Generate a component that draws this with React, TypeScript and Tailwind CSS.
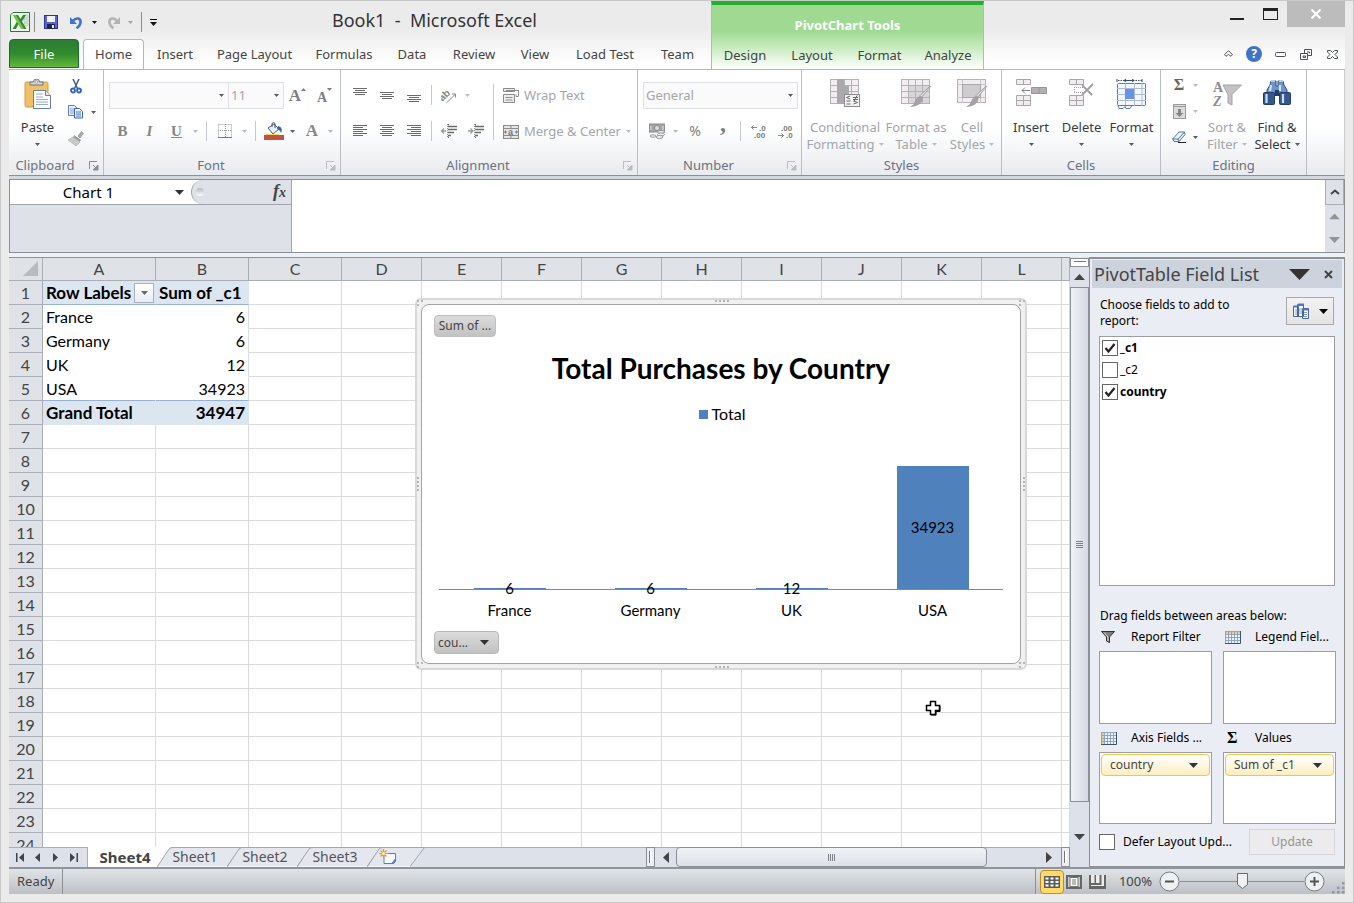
import React, { useState } from 'react';

/* ---------- small shared pieces ---------- */

function Arrow({ color = '#555b63', w = 5 }: { color?: string; w?: number }) {
  const h = Math.ceil(w / 2);
  return (
    <svg width={w} height={h} viewBox={`0 0 ${w} ${h}`} className="shrink-0" aria-hidden="true">
      <path d={`M0 0H${w}L${w / 2} ${h}Z`} fill={color} />
    </svg>
  );
}

const FAINT = '#b9bdc3';

function Tool({ label, className, children }: { label: string; className: string; children: React.ReactNode }) {
  return (
    <button type="button" aria-label={label} className={`flex h-6 shrink-0 items-center justify-center ${className}`}>
      {children}
    </button>
  );
}

function Sep({ className = 'w-3' }: { className?: string }) {
  return (
    <span className={`flex shrink-0 justify-center ${className}`}>
      <span className="h-5 w-px bg-[#c3c7ce]" />
    </span>
  );
}

function Group({
  title,
  width,
  launcher,
  dim,
  children,
}: {
  title: string;
  width: string;
  launcher?: boolean;
  dim?: boolean;
  children: React.ReactNode;
}) {
  return (
    <section aria-label={title} className={`flex shrink-0 flex-col border-r border-[#b9bdc4] ${width}`}>
      <div className="flex h-[85px]">{children}</div>
      <div className="flex h-5 items-center pt-px">
        <span className="flex-1 text-center text-[#6b7180]">{title}</span>
        {launcher && (
          <button type="button" aria-label={`${title} options`} className={`mr-1 ml-2 ${dim ? 'opacity-50' : ''}`}>
            <svg width="10" height="10" viewBox="0 0 10 10">
              <path d="M.5 8V.5H8" fill="none" stroke="#888d96" />
              <path d="M4 4l3 3M9 4v5H4z" stroke="#888d96" fill="#888d96" />
            </svg>
          </button>
        )}
      </div>
    </section>
  );
}

function BigButton({
  icon,
  lines,
  width,
  disabled,
}: {
  icon: React.ReactNode;
  lines: string[];
  width: string;
  disabled?: boolean;
}) {
  const arrow = disabled ? FAINT : '#555b63';
  return (
    <button
      type="button"
      className={`flex shrink-0 flex-col items-center pt-[9px] leading-[17px] ${width} ${
        disabled ? 'text-[#a3a6ab]' : 'text-[#333a42]'
      }`}
    >
      <span className="flex h-[40px] items-start">{icon}</span>
      <span className="whitespace-nowrap">{lines[0]}</span>
      <span className="flex h-[17px] items-center gap-1 whitespace-nowrap">
        {lines[1]}
        <Arrow color={arrow} />
      </span>
    </button>
  );
}

/* ---------- icons ---------- */

const ExcelLogo = () => (
  <svg width="20" height="20" viewBox="0 0 20 20" className="shrink-0">
    <path d="M.5 3L3 .5H19.500V19.500H.5Z" fill="#f1f8ee" stroke="#2c7a3d" />
    <path d="M14 3h4v3h-4zM14 7h4v3h-4zM14 11h4v3h-4z" fill="#dcebd8" stroke="#9fc59a" strokeWidth=".6" />
    <path d="M3 3h5l2.500 4L13 3h3l-4 6.500 4.500 7.500h-5L8.500 12 6 17H2.500l4.500-7.500z" fill="#2f8a3c" />
    <path d="M3 3h3l8 14h-3z" fill="#7ac143" />
  </svg>
);

const SaveIcon = () => (
  <svg width="14" height="14" viewBox="0 0 14 14">
    <rect x=".5" y=".5" width="13" height="13" fill="#5a66d2" stroke="#2c3590" />
    <rect x="3" y="1" width="8" height="6" fill="#f2f4fb" />
    <rect x="3" y="9" width="8" height="5" fill="#20264f" />
    <rect x="8" y="10" width="2" height="3" fill="#e8ebf7" />
  </svg>
);

const UndoIcon = ({ color }: { color: string }) => (
  <svg width="13" height="13" viewBox="0 0 13 13">
    <path d="M3 5C6 1 11 2 10.500 6.500 10.300 9 8.500 11 6.500 12.300" fill="none" stroke={color} strokeWidth="2.600" />
    <path d="M0 1v7h7z" fill={color} />
  </svg>
);

const PasteIcon = () => (
  <svg width="28" height="31" viewBox="0 0 28 31">
    <rect x="1" y="3" width="23" height="25" rx="1.500" fill="#f0c068" stroke="#d29b3f" />
    <path d="M6 6V3h3.500a3 3 0 016 0H19v3z" fill="#d7d9dc" stroke="#6e737b" />
    <circle cx="12.500" cy="3" r="1.300" fill="#fff" stroke="#6e737b" strokeWidth=".6" />
    <path d="M9.500 11.500h12l5 5v13h-17z" fill="#fafcff" stroke="#6a7fa6" />
    <path d="M21.500 11.500v5h5" fill="#dfe7f5" stroke="#6a7fa6" />
    <path d="M12 15h7M12 18h7M12 20.500h12M12 23h12M12 25.500h12" stroke="#9bacc9" />
  </svg>
);

const CutIcon = () => (
  <svg width="12" height="15" viewBox="0 0 12 15">
    <path d="M3 0l4.500 9.500M9 0L4.500 9.500" stroke="#44597f" strokeWidth="1.500" />
    <circle cx="3" cy="11.500" r="2" fill="none" stroke="#2d62c2" strokeWidth="1.800" />
    <circle cx="9" cy="11.500" r="2" fill="none" stroke="#2d62c2" strokeWidth="1.800" />
  </svg>
);

const CopyIcon = () => (
  <svg width="16" height="14" viewBox="0 0 16 14">
    <path d="M.5.5h6l3 3v7h-9z" fill="#eaf1fc" stroke="#5b7fc0" />
    <path d="M2 4h4M2 6h4M2 8h4" stroke="#7f9fd4" />
    <path d="M6.500 3.500h5l3 3v6.500h-8z" fill="#eaf1fc" stroke="#3c66b4" />
    <path d="M8 7h5M8 9h5M8 11h5" stroke="#4e7cc9" />
  </svg>
);

const BrushIcon = () => (
  <svg width="16" height="15" viewBox="0 0 16 15">
    <path d="M10 5l3.500-4.500 2 2L12 7z" fill="#aaa" stroke="#888" strokeWidth=".6" />
    <path d="M6 4l7 5-1.500 2L5 6.500z" fill="#9b9b9b" />
    <path d="M5 6l7 5-4 4-8-6z" fill="#c9c9c9" stroke="#aaa" strokeWidth=".6" />
  </svg>
);

const BorderIcon = () => (
  <svg width="14" height="14" viewBox="0 0 14 14">
    <path d="M.5.5h13v13M.5.5v13M7.500 0v13M0 6.500h14" fill="none" stroke="#9a9a9a" strokeDasharray="1 1" />
    <path d="M0 13.500h14" stroke="#777" />
  </svg>
);

const FillIcon = () => (
  <svg width="20" height="18" viewBox="0 0 20 18">
    <path d="M4 6l6-4 5 5-6 5z" fill="#e6effa" stroke="#3d5f8f" />
    <path d="M8 5V1.500a2 2 0 013 0V6" fill="none" stroke="#4e4e4e" />
    <path d="M14 4c4 1 4.500 4 3 7-1-3-2-3-4-4z" fill="#2f65b5" />
    <rect x="0" y="13" width="20" height="5" fill="#c0504d" />
    <path d="M2 12.500h13" stroke="#f5e04a" />
  </svg>
);

const HLines = ({ rows }: { rows: [number, number, number][] }) => (
  <svg width="14" height="14" viewBox="0 0 14 14">
    {rows.map(([x, y, w]) => (
      <rect key={y} x={x} y={y} width={w} height="1" fill="#6a6a6a" />
    ))}
  </svg>
);

const OrientIcon = () => (
  <svg width="16" height="15" viewBox="0 0 16 15">
    <text x="0" y="12" transform="rotate(-45 3 11)" fontSize="10" fontWeight="700" fontFamily="Liberation Sans, sans-serif" fill="#858585">
      ab
    </text>
    <path d="M6 14.500L14.500 6M14.500 9.500V6h-3.500" fill="none" stroke="#8a8a8a" />
  </svg>
);

const IndentIcon = ({ right }: { right?: boolean }) => (
  <svg width="16" height="14" viewBox="0 0 16 14">
    <path d="M7 .5h1M7 2.500h9M7 5.500h9M7 8.500h6M7 11.500h3M7 13.500h1" stroke="#6c6c6c" strokeWidth="1.400" />
    <path d="M6.500 0v14" stroke="#8c8c8c" strokeDasharray="1 1" />
    <path d={right ? 'M0 7h5M2.500 4.500L5 7 2.500 9.500' : 'M0 7h5M3 4.500L.5 7 3 9.500'} fill="none" stroke="#9a9a9a" strokeWidth="1.300" />
  </svg>
);

const WrapIcon = () => (
  <svg width="16" height="15" viewBox="0 0 16 15">
    <path d="M.5.500h11v3H.5zM.5 6.500h11v8H.5z" fill="#ededed" stroke="#8b8b8b" />
    <path d="M3 2.500h13M2.500 9.500h7M2.500 12h7" stroke="#8b8b8b" />
    <path d="M15.500 3v5M13 6.500v2h2.500" stroke="#8b8b8b" fill="none" />
  </svg>
);

const MergeIcon = () => (
  <svg width="16" height="14" viewBox="0 0 16 14">
    <rect x=".5" y=".5" width="15" height="13" fill="#e6e6e6" stroke="#8b8b8b" />
    <path d="M0 3.500h16M0 10.500h16M8 0v3.500M8 10.500V14" stroke="#8b8b8b" />
    <path d="M1 7h3M12 7h3M2.500 5.500v3M13.500 5.500v3" stroke="#777" />
    <text x="5" y="10" fontSize="9" fontWeight="700" fontFamily="Liberation Sans, sans-serif" fill="#777">
      a
    </text>
  </svg>
);

const MoneyIcon = () => (
  <svg width="16" height="16" viewBox="0 0 16 16">
    <rect x=".5" y="1" width="15" height="8" fill="#a5a2a5" stroke="#8f8c8f" />
    <circle cx="8" cy="5" r="2.500" fill="#ddd" stroke="#8f8c8f" />
    <path d="M2 3v4M14 3v4" stroke="#e6e6e6" />
    <ellipse cx="12" cy="9" rx="3.500" ry="1.500" fill="#eee" stroke="#999" />
    <ellipse cx="12" cy="11.500" rx="3.500" ry="1.500" fill="#eee" stroke="#999" />
    <ellipse cx="10.500" cy="14" rx="3.500" ry="1.500" fill="#eee" stroke="#999" />
    <ellipse cx="4" cy="13" rx="3" ry="1.200" fill="#eee" stroke="#999" />
  </svg>
);

const DecimalIcon = ({ more }: { more?: boolean }) => (
  <svg width="17" height="15" viewBox="0 0 17 15" fontSize="8" fontWeight="700" fontFamily="Liberation Sans, sans-serif" fill="#7a7a7a">
    <path d={more ? 'M0 3.500h6M2.500 1.500l-2 2 2 2' : 'M0 11.500h6M3.500 9.500l2 2-2 2'} fill="none" stroke="#8a8a8a" />
    <text x={more ? 8 : 3} y="6.500">
      {more ? '.0' : '.00'}
    </text>
    <text x={more ? 3 : 8} y="14">
      {more ? '.00' : '.0'}
    </text>
  </svg>
);

const TableGrid = () => (
  <>
    <rect x=".5" y=".5" width="28" height="24" fill="#f1edf1" stroke="#b5b2b5" />
    <path d="M0 6.500h29M0 12.500h29M0 18.500h29M7.500 0v25M14.500 0v25M21.500 0v25" stroke="#b5b2b5" />
  </>
);

const BrushOverlay = () => (
  <>
    <path d="M30 7l-9.500 11.500-2-1.500L28 8z" fill="#dedcde" stroke="#9a989a" strokeWidth=".8" />
    <path d="M21 18c1 4-2 9-11 9.500 4-2 4-5 6-8 1.500-2 3.500-2 5-1.500z" fill="#a5a3a5" stroke="#949294" strokeWidth=".6" />
  </>
);

const CondIcon = () => (
  <svg width="31" height="30" viewBox="0 0 31 30">
    <TableGrid />
    <path d="M7 0h7v25H7zM14 7h5v11h-5z" fill="#aba9ab" />
    <rect x="14.500" y="15.500" width="15" height="12" fill="#f3f3f3" stroke="#8d8b8d" />
    <path d="M20 17l-3.500 1.500L20 20M16.500 22h4M16.500 25h4M23 18.500h5M23 20.500h5M27 16.500l-3 6M23.500 22l4 1.500-4 1.500" fill="none" stroke="#666" />
  </svg>
);

const FormatTableIcon = () => (
  <svg width="31" height="30" viewBox="0 0 31 30">
    <TableGrid />
    <path d="M8 7h20v17H8z" fill="#c9c6c9" opacity=".6" />
    <path d="M8 12.500h20M8 18.500h20M14.500 7v17M21.500 7v17" stroke="#b5b2b5" />
    <BrushOverlay />
  </svg>
);

const CellStylesIcon = () => (
  <svg width="31" height="30" viewBox="0 0 31 30">
    <rect x=".5" y=".5" width="28" height="23" fill="#f1edf1" stroke="#b5b2b5" />
    <path d="M0 5.500h29M0 18.500h29M5.500 0v24M23.500 0v24" stroke="#c9c6c9" />
    <rect x="5.500" y="5.500" width="18" height="13" fill="#cfccd0" stroke="#aaa7aa" />
    <BrushOverlay />
  </svg>
);

const InsertIcon = () => (
  <svg width="31" height="27" viewBox="0 0 31 27" fill="#f1edf1" stroke="#aaa7aa">
    <path d="M.5.500h14v5H.5zM7.500.500v5M.5 16.500h14v10H.5zM.5 21.500h14M7.500 16.500v10" />
    <path d="M15.500 8.500h15v6h-15zM23 8.500v6" fill="#b3b0b3" stroke="#979597" />
    <path d="M6 11.500h8M9 8.500l-3 3 3 3" fill="none" stroke="#858385" />
  </svg>
);

const DeleteIcon = () => (
  <svg width="25" height="27" viewBox="0 0 25 27" fill="#f1edf1" stroke="#aaa7aa">
    <path d="M.5.500h14v5H.5zM7.500.500v5M.5 16.500h14v10H.5zM.5 21.500h14M7.500 16.500v10" />
    <path d="M5.500 8v6M5 8.500h10M5 13.500h10" fill="none" strokeDasharray="1 1" />
    <path d="M13 6l10 10M24 5L13 16" fill="none" stroke="#a19fa1" strokeWidth="1.800" />
  </svg>
);

const FormatCellsIcon = () => (
  <svg width="31" height="30" viewBox="0 0 31 30">
    <path d="M1 0v3M26 0v3" stroke="#33506f" />
    <path d="M2 1.500h24" stroke="#33506f" strokeDasharray="1.500 1" />
    <path d="M8 1.500h10M10 0L8 1.500 10 3M16 0l2 1.500L16 3" stroke="#33506f" fill="none" />
    <rect x="1.500" y="4.500" width="28" height="22" rx="1" fill="#f4f8fd" stroke="#5b7ca5" />
    <path d="M1 9.500h29M1 15.500h29M1 21.500h29M9.500 4v23M18.500 4v23M26 4v23" stroke="#a9bcd6" />
    <rect x="9" y="10" width="9" height="10" fill="#6a92e8" />
    <path d="M2 26.500h14l-2 3H10l-1-2-2 2H3z" fill="#f4f8fd" stroke="#5b7ca5" />
  </svg>
);

const FillDownIcon = () => (
  <svg width="13" height="15" viewBox="0 0 13 15">
    <rect x=".5" y=".5" width="12" height="14" fill="#dcdadc" stroke="#9d9b9d" />
    <path d="M0 2.500h13" stroke="#9d9b9d" />
    <path d="M5 5h3v4h2.500L6.500 13 2.500 9H5z" fill="#858385" />
  </svg>
);

const EraserIcon = () => (
  <svg width="14" height="12" viewBox="0 0 14 12">
    <path d="M.7 8L7 1h5.500L13 3.500 7 10.500H2z" fill="#eaf2fc" stroke="#56759d" />
    <path d="M.7 8h5.500L12.500 1M6.200 8l.8 2.500" fill="none" stroke="#56759d" />
    <path d="M6 11.500h8" stroke="#222" />
  </svg>
);

const SortIcon = () => (
  <svg width="30" height="31" viewBox="0 0 30 31">
    <text x="1" y="13" fontSize="14" fontWeight="700" fontFamily="Liberation Serif, serif" fill="#8e8c8e">
      A
    </text>
    <text x="1" y="27" fontSize="14" fontWeight="700" fontStyle="italic" fontFamily="Liberation Serif, serif" fill="#8e8c8e">
      Z
    </text>
    <path d="M11 6h18.500L20 15.500V26l-4-2v-8.500z" fill="#c3c1c3" stroke="#a5a3a5" />
  </svg>
);

const FindIcon = () => (
  <svg width="28" height="27" viewBox="0 0 28 27">
    <path d="M8 2h5v5h2V2h5l1 4 3 5v4H4v-4l3-5z" fill="#6f94c9" stroke="#2f4f80" />
    <path d="M8 2h4M16 2h4" stroke="#b6cbe8" strokeWidth="2" />
    <rect x=".5" y="13.500" width="11" height="12" rx="1" fill="#34578f" stroke="#223c6b" />
    <rect x="16.500" y="13.500" width="11" height="12" rx="1" fill="#34578f" stroke="#223c6b" />
    <path d="M3.500 15v9M20 15v9M8 6l-1 6M17 6v6" stroke="#cfe0f5" strokeWidth="2.200" />
    <rect x="12" y="11" width="4" height="6" fill="#223c6b" />
  </svg>
);

const PaneLayoutIcon = () => (
  <svg width="16" height="16" viewBox="0 0 16 16">
    <path d="M5 .5h6v3H5z" fill="#4a78d0" />
    <path d="M.5 3.500h5v10h-5zM4.500 1.500h6v12h-6zM9.500 5.500h6v10h-6z" fill="#fff" stroke="#4a6494" />
    <path d="M.5 3.500h4M5 2h5M10 6.500h5" stroke="#4a78d0" strokeWidth="2" />
    <path d="M2 7h2M2 9h2M2 11h2M6 6h3M6 8h3M6 10h3M11 9.500h3M11 11.500h3M11 13.500h3" stroke="#7d9bd0" />
  </svg>
);

const FunnelIcon = () => (
  <svg width="14" height="12" viewBox="0 0 14 12">
    <path d="M.5.500h13L8.500 6v5.500l-3-1.500V6z" fill="#7d7d7d" stroke="#333" />
    <path d="M3 1.500L7 6v4" stroke="#e8e8e8" fill="none" />
  </svg>
);

const FieldGridIcon = ({ side }: { side: 'top' | 'left' }) => (
  <svg width="16" height="13" viewBox="0 0 16 13">
    <rect width="16" height="13" fill="#edf3fb" />
    {side === 'top' ? <rect width="16" height="4" fill="#f2cd74" /> : <rect width="4" height="13" fill="#f2cd74" />}
    <path d="M0 .5h16M0 3.500h16M0 6.500h16M0 9.500h16M.5 0v13M3.500 0v13M6.500 0v13M9.500 0v13M12.500 0v13" stroke="#8fa6c8" />
    <path d="M0 12.500h15.500V0" fill="none" stroke="#3b5275" />
  </svg>
);

/* ---------- ribbon ---------- */

const tabs: [string, string][] = [
  ['Insert', 'w-[62px]'],
  ['Page Layout', 'w-[97px]'],
  ['Formulas', 'w-[82px]'],
  ['Data', 'w-[54px]'],
  ['Review', 'w-[70px]'],
  ['View', 'w-[52px]'],
  ['Load Test', 'w-[88px]'],
  ['Team', 'w-[57px]'],
];

const chartTabs: [string, string][] = [
  ['Design', 'w-[66px]'],
  ['Layout', 'w-[68px]'],
  ['Format', 'w-[67px]'],
  ['Analyze', 'w-[70px]'],
];

function TabButton({ name, width }: { name: string; width: string }) {
  return (
    <button type="button" className={`h-[29px] shrink-0 pt-0.5 text-center whitespace-nowrap text-[#444] ${width}`}>
      {name}
    </button>
  );
}

function Header() {
  return (
    <header className="flex h-[69px] shrink-0 border-b border-[#b5b8bd] bg-linear-to-b from-[#ebebeb] from-40% to-white to-90%">
      <div className="flex w-[702px] shrink-0 flex-col">
        <div className="flex h-[39px] items-center">
          <div className="flex shrink-0 items-center pt-1 pl-px">
            <ExcelLogo />
            <span className="mx-1 h-5 w-px shrink-0 bg-[#8c8c8c]" />
            <button type="button" aria-label="Save" className="ml-[5px]">
              <SaveIcon />
            </button>
            <button type="button" aria-label="Undo" className="ml-3 flex items-center gap-[9px]">
              <UndoIcon color="#3f73cf" />
              <Arrow color="#111" />
            </button>
            <button type="button" aria-label="Redo" className="ml-[10px] flex items-center gap-2">
              <span className="-scale-x-100">
                <UndoIcon color="#b3b3b3" />
              </span>
              <Arrow color="#a5a5a5" />
            </button>
            <span className="mx-2 h-5 w-px shrink-0 bg-[#8c8c8c]" />
            <button type="button" aria-label="Customize toolbar" className="flex flex-col items-center gap-0.5">
              <span className="h-px w-[7px] bg-black" />
              <Arrow color="#111" w={7} />
            </button>
          </div>
          <h1 className="flex-1 pl-[175px] text-[18px] whitespace-pre text-[#333]">Book1  -  Microsoft Excel</h1>
        </div>
        <nav aria-label="Ribbon tabs" className="flex">
          <button
            type="button"
            className="h-[29px] w-[70px] rounded-t-sm border border-[#1c6b30] bg-linear-to-b from-[#2c7d33] via-[#2f8a2c] to-[#62b83c] pt-0.5 text-center text-white"
          >
            File
          </button>
          <button
            type="button"
            className="relative ml-1 h-[30px] w-[61px] rounded-t-sm border border-b-0 border-[#b5b8bd] bg-white pt-px text-center text-[#444]"
          >
            Home
          </button>
          {tabs.map(([n, w]) => (
            <TabButton key={n} name={n} width={w} />
          ))}
        </nav>
      </div>
      <div className="flex w-[273px] shrink-0 flex-col border-x border-t-4 border-x-[#8fd48b] border-t-[#22b02c] bg-linear-to-b from-[#9fd992] from-40% via-[#c5eabc] via-65% to-white">
        <div className="flex h-[35px] items-center justify-center pt-1.5 font-bold text-white">PivotChart Tools</div>
        <div className="flex">
          {chartTabs.map(([n, w]) => (
            <TabButton key={n} name={n} width={w} />
          ))}
        </div>
      </div>
      <div className="flex flex-1 flex-col items-end">
        <div className="flex h-[39px] items-start">
          <button type="button" aria-label="Minimize" className="flex h-[26px] w-[33px] items-center justify-center">
            <svg width="14" height="12" viewBox="0 0 14 12">
              <path d="M0 11h14" stroke="#222" strokeWidth="2" />
            </svg>
          </button>
          <button type="button" aria-label="Maximize" className="flex h-[26px] w-[34px] items-center justify-center">
            <svg width="15" height="12" viewBox="0 0 15 12">
              <rect x=".5" y=".5" width="14" height="11" fill="none" stroke="#222" />
              <path d="M0 1.500h15" stroke="#222" strokeWidth="3" />
            </svg>
          </button>
          <button type="button" aria-label="Close" className="flex h-[26px] w-[58px] items-center justify-center bg-[#bcbcbc]">
            <svg width="12" height="10" viewBox="0 0 12 10">
              <path d="M1.500.5l9 9M10.500.5l-9 9" stroke="#fff" strokeWidth="2" />
            </svg>
          </button>
        </div>
        <div className="flex h-7 items-center">
          <Tool label="Collapse ribbon" className="w-[26px]">
            <svg width="9" height="8" viewBox="0 0 9 8">
              <path d="M4.500.7l4 4-1.600 1.600-2.400-2-2.400 2L.5 4.700z" fill="#fff" stroke="#4a4f57" />
            </svg>
          </Tool>
          <Tool label="Help" className="w-[26px]">
            <span className="flex size-4 items-center justify-center rounded-full bg-[#3f74c8] text-xs font-bold text-white">?</span>
          </Tool>
          <Tool label="Minimize workbook" className="w-[26px]">
            <svg width="11" height="5" viewBox="0 0 11 5">
              <rect x=".5" y=".5" width="10" height="4" rx="1" fill="#fff" stroke="#4a4f57" />
            </svg>
          </Tool>
          <Tool label="Restore workbook" className="w-[26px]">
            <svg width="12" height="11" viewBox="0 0 12 11">
              <path d="M4.500.500h7v6h-7zM7 3h2.500v1.500" fill="#fff" stroke="#4a4f57" />
              <path d="M.5 4.500h7v6h-7zM3 7h2.500v1.500H3z" fill="#fff" stroke="#4a4f57" />
            </svg>
          </Tool>
          <Tool label="Close workbook" className="w-[26px]">
            <svg width="11" height="9" viewBox="0 0 11 9">
              <path d="M.5.500h3l2 2 2-2h3v1.500L8 4.500 10.500 7v1.500h-3l-2-2-2 2h-3V7L3 4.500.5 2z" fill="#fff" stroke="#4a4f57" />
            </svg>
          </Tool>
        </div>
      </div>
    </header>
  );
}

function Combo({ label, value, width }: { label: string; value: string; width: string }) {
  return (
    <label className={`relative flex h-[27px] shrink-0 items-center border border-[#dfe1e6] bg-[#fafafa] ${width}`}>
      <select aria-label={label} defaultValue={value} className="size-full appearance-none px-0.5 text-[#a3a6ab] outline-none">
        <option>{value}</option>
      </select>
      <span className="pointer-events-none absolute right-1">
        <Arrow />
      </span>
    </label>
  );
}

function Ribbon() {
  return (
    <div className="flex h-[106px] shrink-0 border-r border-b border-r-[#c9ccd1] border-b-[#8b9097] bg-linear-to-b from-white from-55% to-[#e8ebef]">
      <Group title="Clipboard" width="w-[95px]" launcher>
        <BigButton width="w-[57px]" icon={<PasteIcon />} lines={['Paste', '']} />
        <div className="flex flex-col gap-0.5 pt-1">
          <Tool label="Cut" className="w-5">
            <CutIcon />
          </Tool>
          <div className="flex">
            <Tool label="Copy" className="w-5">
              <CopyIcon />
            </Tool>
            <Tool label="Copy options" className="w-[14px]">
              <Arrow />
            </Tool>
          </div>
          <Tool label="Format Painter" className="w-5">
            <BrushIcon />
          </Tool>
        </div>
      </Group>

      <Group title="Font" width="w-[237px]" launcher dim>
        <div className="flex flex-col gap-[10px] pt-3 pl-[5px]">
          <div className="flex items-center">
            <Combo label="Font name" value="" width="w-[120px]" />
            <Combo label="Font size" value="11" width="w-[56px] -ml-px" />
            <Tool label="Grow font" className="w-[27px] text-[17px] font-bold text-[#7d7d7d]">
              <span className="font-['Liberation_Serif',serif]">A</span>
              <span className="mb-3 rotate-180">
                <Arrow color="#7d7d7d" />
              </span>
            </Tool>
            <Tool label="Shrink font" className="w-[27px] text-sm font-bold text-[#7d7d7d]">
              <span className="mt-1 font-['Liberation_Serif',serif]">A</span>
              <span className="mb-3">
                <Arrow color="#7d7d7d" />
              </span>
            </Tool>
          </div>
          <div className="flex items-center font-['Liberation_Serif',serif] text-[15px] font-bold text-[#868686]">
            <Tool label="Bold" className="w-[27px]">
              B
            </Tool>
            <Tool label="Italic" className="w-[27px] italic">
              I
            </Tool>
            <Tool label="Underline" className="w-[27px] underline">
              U
            </Tool>
            <Tool label="Underline options" className="w-[10px]">
              <Arrow color={FAINT} />
            </Tool>
            <Sep />
            <Tool label="Borders" className="w-[26px]">
              <BorderIcon />
            </Tool>
            <Tool label="Border options" className="w-3">
              <Arrow color={FAINT} />
            </Tool>
            <Sep className="w-[10px]" />
            <Tool label="Fill color" className="w-7">
              <FillIcon />
            </Tool>
            <Tool label="Fill color options" className="w-2">
              <Arrow />
            </Tool>
            <Tool label="Font color" className="w-8 text-[17px]">
              A
            </Tool>
            <Tool label="Font color options" className="w-[5px]">
              <Arrow color={FAINT} />
            </Tool>
          </div>
        </div>
      </Group>

      <Group title="Alignment" width="w-[297px]" launcher dim>
        <div className="flex flex-col gap-3 pt-[13px] pl-[5px]">
          <div className="flex items-center">
            <Tool label="Top align" className="w-[27px]">
              <HLines rows={[[0, 0, 14], [2, 2, 10], [0, 4, 14], [2, 6, 10]]} />
            </Tool>
            <Tool label="Middle align" className="w-[27px]">
              <HLines rows={[[0, 4, 14], [2, 6, 10], [0, 8, 14], [2, 10, 10]]} />
            </Tool>
            <Tool label="Bottom align" className="w-[27px]">
              <HLines rows={[[0, 7, 14], [2, 9, 10], [0, 11, 14], [2, 13, 10]]} />
            </Tool>
            <Sep className="w-2" />
            <Tool label="Orientation" className="w-7">
              <OrientIcon />
            </Tool>
            <Tool label="Orientation options" className="w-2">
              <Arrow color={FAINT} />
            </Tool>
          </div>
          <div className="flex items-center">
            <Tool label="Align left" className="w-[27px]">
              <HLines rows={[[0, 1, 14], [0, 3, 10], [0, 5, 14], [0, 7, 10], [0, 9, 14], [0, 11, 10]]} />
            </Tool>
            <Tool label="Center" className="w-[27px]">
              <HLines rows={[[0, 1, 14], [2, 3, 10], [0, 5, 14], [2, 7, 10], [0, 9, 14], [2, 11, 10]]} />
            </Tool>
            <Tool label="Align right" className="w-[27px]">
              <HLines rows={[[0, 1, 14], [4, 3, 10], [0, 5, 14], [4, 7, 10], [0, 9, 14], [4, 11, 10]]} />
            </Tool>
            <Sep className="w-2" />
            <Tool label="Decrease indent" className="w-7">
              <IndentIcon />
            </Tool>
            <Tool label="Increase indent" className="w-[26px]">
              <IndentIcon right />
            </Tool>
          </div>
        </div>
        <span className="mt-[14px] ml-1 h-[56px] w-px bg-[#c3c7ce]" />
        <div className="flex flex-col gap-3 pt-[13px] pl-[9px] text-[#a3a6ab]">
          <button type="button" className="flex h-6 items-center gap-[5px] pt-px">
            <WrapIcon />
            Wrap Text
          </button>
          <button type="button" className="flex h-6 items-center gap-[5px] pt-px whitespace-nowrap">
            <MergeIcon />
            Merge &amp; Center
            <Arrow color={FAINT} />
          </button>
        </div>
      </Group>

      <Group title="Number" width="w-[164px]" launcher dim>
        <div className="flex flex-col gap-[10px] pt-3 pl-[5px]">
          <Combo label="Number format" value="General" width="w-[155px]" />
          <div className="flex items-center text-[#7d7d7d]">
            <Tool label="Accounting format" className="w-7">
              <MoneyIcon />
            </Tool>
            <Tool label="Accounting options" className="w-2">
              <Arrow color={FAINT} />
            </Tool>
            <Tool label="Percent style" className="w-8 text-sm">
              %
            </Tool>
            <Tool label="Comma style" className="w-6 font-['Liberation_Serif',serif] text-2xl leading-none font-bold">
              <span className="-mt-4">,</span>
            </Tool>
            <Sep className="w-[10px]" />
            <Tool label="Increase decimal" className="w-7">
              <DecimalIcon more />
            </Tool>
            <Tool label="Decrease decimal" className="w-[26px]">
              <DecimalIcon />
            </Tool>
          </div>
        </div>
      </Group>

      <Group title="Styles" width="w-[200px]">
        <BigButton width="w-[86px]" icon={<CondIcon />} lines={['Conditional', 'Formatting']} disabled />
        <BigButton width="w-[56px]" icon={<FormatTableIcon />} lines={['Format as', 'Table']} disabled />
        <BigButton width="w-[56px]" icon={<CellStylesIcon />} lines={['Cell', 'Styles']} disabled />
      </Group>

      <Group title="Cells" width="w-[159px]">
        <span className="w-[3px]" />
        <BigButton width="w-[52px]" icon={<InsertIcon />} lines={['Insert', '']} />
        <BigButton width="w-[49px]" icon={<DeleteIcon />} lines={['Delete', '']} />
        <BigButton width="w-[51px]" icon={<FormatCellsIcon />} lines={['Format', '']} />
      </Group>

      <Group title="Editing" width="w-[146px]">
        <div className="flex w-[41px] flex-col gap-0.5 pt-[3px] pl-2">
          {[
            { label: 'Sum', icon: <span className="font-['Liberation_Serif',serif] text-base leading-none font-bold text-[#666]">Σ</span>, arrow: FAINT },
            { label: 'Fill', icon: <FillDownIcon />, arrow: FAINT },
            { label: 'Clear', icon: <EraserIcon />, arrow: '#555b63' },
          ].map((t) => (
            <div key={t.label} className="flex">
              <Tool label={t.label} className="w-5">
                {t.icon}
              </Tool>
              <Tool label={`${t.label} options`} className="w-3">
                <Arrow color={t.arrow} />
              </Tool>
            </div>
          ))}
        </div>
        <BigButton width="w-[50px]" icon={<SortIcon />} lines={['Sort &', 'Filter']} disabled />
        <BigButton width="w-[50px]" icon={<FindIcon />} lines={['Find &', 'Select']} />
      </Group>
    </div>
  );
}

/* ---------- formula bar ---------- */

function FormulaBar() {
  return (
    <div className="flex h-[74px] shrink-0 border border-[#8b9097] bg-[#dee2e8]">
      <div className="flex w-[281px] shrink-0 flex-col">
        <div className="flex h-[25px] border-b border-[#a0a5ad] bg-white">
          <input aria-label="Name box" defaultValue="Chart 1" className="w-[157px] text-center text-[15px] outline-none" />
          <button type="button" aria-label="Name list" className="flex w-6 items-center justify-center">
            <Arrow color="#333" w={9} />
          </button>
          <div className="flex flex-1 items-center justify-between rounded-l-full border-l border-[#a0a5ad] bg-[#dee2e8] pr-[5px] pl-1">
            <span className="size-2 rounded-full bg-linear-to-b from-[#b4b8be] to-white" />
            <button type="button" aria-label="Insert function" className="font-['Liberation_Serif',serif] text-lg leading-none font-bold text-[#444] italic">
              f<sub className="bottom-0 text-sm">x</sub>
            </button>
          </div>
        </div>
      </div>
      <textarea aria-label="Formula" className="flex-1 resize-none border-l border-[#a0a5ad] bg-white outline-none" />
      <div className="flex w-[19px] shrink-0 flex-col items-center">
        <button type="button" aria-label="Collapse formula bar" className="flex h-[25px] w-full items-center justify-center border border-t-0 border-[#a9aeb6]">
          <svg width="10" height="6" viewBox="0 0 10 6">
            <path d="M1 5l4-3.500L9 5" fill="none" stroke="#444" strokeWidth="2" />
          </svg>
        </button>
        <button type="button" aria-label="Scroll formula up" className="flex flex-1 rotate-180 items-center">
          <Arrow color="#8c9794" w={11} />
        </button>
        <button type="button" aria-label="Scroll formula down" className="flex flex-1 items-center">
          <Arrow color="#8c9794" w={11} />
        </button>
      </div>
    </div>
  );
}

/* ---------- worksheet ---------- */

const columns = ['A', 'B', 'C', 'D', 'E', 'F', 'G', 'H', 'I', 'J', 'K', 'L', ''];
const colWidths = [
  'w-[113px]', 'w-[93px]', 'w-[93px]', 'w-[80px]', 'w-[80px]', 'w-[80px]', 'w-[80px]',
  'w-[80px]', 'w-[80px]', 'w-[80px]', 'w-[80px]', 'w-[80px]', 'w-auto',
];
const pivot: [string, string][] = [
  ['Row Labels', 'Sum of _c1'],
  ['France', '6'],
  ['Germany', '6'],
  ['UK', '12'],
  ['USA', '34923'],
  ['Grand Total', '34947'],
];

function cellStyle(row: number, col: number) {
  if (col > 1 || row > 5) return 'border-[#d8dadc]';
  if (row === 0) return 'bg-[#dce6f1] border-r-[#dce6f1] border-b-[#95b3d7] text-[17px] font-bold';
  if (row === 5) return 'bg-[#dce6f1] border-[#dce6f1] text-[17px] font-bold';
  const right = col === 1 ? 'border-r-[#d8dadc]' : 'border-r-transparent';
  return row === 4 ? `${right} border-b-[#95b3d7]` : `${right} border-b-transparent`;
}

function Sheet() {
  return (
    <table className="w-full table-fixed border-separate border-spacing-0 font-['Lato',sans-serif] text-base leading-none text-black">
      <colgroup>
        <col className="w-[34px]" />
        {colWidths.map((w, i) => (
          <col key={i} className={w} />
        ))}
      </colgroup>
      <thead>
        <tr className="h-6 bg-[#dfe2e7] text-[#444]">
          <th className="border-r border-b border-[#a9adb5] p-0">
            <svg width="15" height="15" viewBox="0 0 15 15" className="ml-auto mr-1">
              <path d="M15 0v15H0z" fill="#b7bcc2" />
            </svg>
          </th>
          {columns.map((c, i) => (
            <th key={i} scope="col" className="border-r border-b border-[#a9adb5] p-0 font-normal">
              {c}
            </th>
          ))}
        </tr>
      </thead>
      <tbody>
        {Array.from({ length: 24 }, (_, r) => (
          <tr key={r} className="h-6">
            <th scope="row" className="border-r border-b border-[#a9adb5] bg-[#dfe2e7] p-0 font-normal text-[#444]">
              {r + 1}
            </th>
            {columns.map((_, c) => (
              <td
                key={c}
                className={`border-r border-b px-[3px] py-0 whitespace-nowrap ${cellStyle(r, c)} ${c === 1 && r > 0 ? 'text-right' : ''}`}
              >
                {r === 0 && c === 0 ? (
                  <div className="-mr-0.5 flex items-center justify-between">
                    {pivot[0][0]}
                    <button type="button" aria-label="Filter row labels" className="flex size-5 items-center justify-center border border-[#a9b1bd] bg-linear-to-b from-white to-[#e8ecf2]">
                      <Arrow color="#666" w={7} />
                    </button>
                  </div>
                ) : (
                  pivot[r]?.[c]
                )}
              </td>
            ))}
          </tr>
        ))}
      </tbody>
    </table>
  );
}

const chartData = [
  { name: 'France', value: 6 },
  { name: 'Germany', value: 6 },
  { name: 'UK', value: 12 },
  { name: 'USA', value: 34923 },
];
const chartMax = 34923;
const plotHeight = 123;

const Dots = ({ className }: { className: string }) => (
  <span className={`absolute flex gap-0.5 ${className}`}>
    {[0, 1, 2, 3].map((i) => (
      <span key={i} className="size-0.5 bg-[#b5b5b5]" />
    ))}
  </span>
);

const CornerDots = ({ className }: { className: string }) => (
  <span className={`absolute grid grid-cols-2 gap-0.5 ${className}`}>
    {[0, 1, 2].map((i) => (
      <span key={i} className="size-0.5 bg-[#b5b5b5]" />
    ))}
  </span>
);

function PivotChart() {
  return (
    <figure
      aria-label="Total Purchases by Country"
      className="absolute top-[41px] left-[406px] h-[372px] w-[612px] rounded-md border-2 border-[#d8d8d8] bg-[#f0f0f0]/90 p-1 font-['Lato',sans-serif] text-black"
    >
      <Dots className="top-0 left-[298px]" />
      <Dots className="bottom-0 left-[298px]" />
      <Dots className="top-[177px] left-0 flex-col" />
      <Dots className="top-[177px] right-0 flex-col" />
      <CornerDots className="top-0 left-0" />
      <CornerDots className="top-0 right-0" />
      <CornerDots className="bottom-0 left-0" />
      <CornerDots className="right-0 bottom-0" />
      <div className="flex size-full flex-col rounded-lg border border-[#a3a3a3] bg-white px-3 pt-[10px] pb-[9px]">
        <button
          type="button"
          className="h-[22px] w-[62px] rounded-sm border border-[#c0c0c0] bg-linear-to-b from-[#dcdcdc] to-[#c2c2c2] text-center font-['Noto_Sans',sans-serif] text-xs whitespace-nowrap text-[#444]"
        >
          Sum of ...
        </button>
        <figcaption className="mt-[13px] text-center text-[28px] leading-[36px] font-bold">Total Purchases by Country</figcaption>
        <div className="mt-[18px] flex items-center justify-center gap-1 pl-0.5 text-base leading-5">
          <span className="size-[9px] bg-[#4f81bd]" />
          Total
        </div>
        <div className="mt-auto ml-[5px] flex h-[123px] w-[564px] items-end border-b border-[#868686] text-[15px]">
          {chartData.map((d) => {
            const h = Math.max(1, Math.round((d.value / chartMax) * plotHeight));
            return (
              <div key={d.name} className="flex flex-1 justify-center">
                <div className="flex w-[72px] items-center justify-center bg-[#4f81bd] leading-none" style={{ height: h }}>
                  {d.value}
                </div>
              </div>
            );
          })}
        </div>
        <div className="mt-[10px] ml-[5px] flex w-[564px] text-[15px] leading-5">
          {chartData.map((d) => (
            <span key={d.name} className="flex-1 text-center">
              {d.name}
            </span>
          ))}
        </div>
        <button
          type="button"
          className="mt-[11px] flex h-[23px] w-[65px] shrink-0 items-center gap-3 rounded-sm border border-[#b8b8b8] bg-linear-to-b from-[#dcdcdc] to-[#c2c2c2] px-[3px] font-['Noto_Sans',sans-serif] text-xs text-[#444]"
        >
          cou...
          <Arrow color="#333" w={9} />
        </button>
      </div>
    </figure>
  );
}

function SheetTab({ name, active }: { name?: string; active?: boolean }) {
  if (active) {
    return (
      <button type="button" className="relative h-5 w-[83px] shrink-0 pr-[9px] text-center text-[15px] leading-5 font-bold text-[#444]">
        <svg className="absolute inset-0" width="83" height="20" viewBox="0 0 83 20" aria-hidden="true">
          <path d="M0 0h83L69 20H0z" fill="#fff" />
        </svg>
        <span className="relative">{name}</span>
      </button>
    );
  }
  return (
    <button
      type="button"
      aria-label={name ?? 'Insert worksheet'}
      className={`relative -ml-[14px] flex h-5 shrink-0 items-center justify-center text-sm text-[#555] ${name ? 'w-[84px] pr-2' : 'w-[58px] pr-4'}`}
    >
      <svg className="absolute inset-0 size-full" viewBox={name ? '0 0 84 20' : '0 0 58 20'} aria-hidden="true">
        <path
          d={name ? 'M.5 19.500L12 2Q13.500.500 16 .5H83.500L70 19.500z' : 'M.5 19.500L12 2Q13.500.500 16 .5H57.500L43 19.500z'}
          fill="#e4e8ee"
          stroke="#a3a8b0"
        />
        <path d={name ? 'M1 19.500H70' : 'M1 19.500H43'} stroke="#f5f6f8" />
      </svg>
      <span className="relative">
        {name ?? (
          <svg width="18" height="16" viewBox="0 0 18 16">
            <path d="M5 4.500h11.500v8l-2 2H5z" fill="#f5f9ff" stroke="#5c7fb8" />
            <path d="M16.500 10.500l-3 4" stroke="#5c7fb8" strokeWidth="2" />
            <path d="M4.500 0v9M0 4.500h9M1.500 1.500l6 6M7.500 1.500l-6 6" stroke="#f09a1a" strokeWidth="1.200" />
            <circle cx="4.500" cy="4.500" r="1.500" fill="#fff2a8" />
          </svg>
        )}
      </span>
    </button>
  );
}

const navPaths: [string, string][] = [
  ['First sheet', 'M1 0h1.500v9H1zM9 0v9L4 4.500z'],
  ['Previous sheet', 'M7 0v9L2 4.500z'],
  ['Next sheet', 'M2 0v9l5-4.500z'],
  ['Last sheet', 'M1 0v9l5-4.500zM7.500 0H9v9H7.500z'],
];

function Splitter() {
  return (
    <span className="flex h-5 w-[9px] shrink-0 items-center justify-center border border-[#8b9097] bg-[#eceefa]">
      <span className="h-3 w-[3px] border-l border-[#777] bg-white" />
    </span>
  );
}

function BottomBar() {
  return (
    <div className="flex h-5 shrink-0 bg-[#dce1ea] shadow-[inset_0_1px_0_#a9adb5]">
      <div className="flex w-[79px] shrink-0 items-center border-r border-[#a9adb5] pl-0.5">
        {navPaths.map(([label, d]) => (
          <button key={label} type="button" aria-label={label} className="flex w-[18px] justify-center">
            <svg width="10" height="9" viewBox="0 0 10 9">
              <path d={d} fill="#40454d" />
            </svg>
          </button>
        ))}
      </div>
      <SheetTab name="Sheet4" active />
      <SheetTab name="Sheet1" />
      <SheetTab name="Sheet2" />
      <SheetTab name="Sheet3" />
      <SheetTab />
      <div className="flex-1" />
      <div className="flex w-[424px] shrink-0 items-center">
        <Splitter />
        <button type="button" aria-label="Scroll left" className="flex w-[21px] justify-center">
          <svg width="6" height="11" viewBox="0 0 6 11">
            <path d="M6 0v11L0 5.500z" fill="#444" />
          </svg>
        </button>
        <div className="flex h-5 flex-1 items-center">
          <span className="flex h-5 w-[311px] items-center justify-center gap-px rounded-sm border border-[#8b9097] bg-linear-to-b from-[#f0f3f7] to-[#dde0e6]">
            {[0, 1, 2, 3].map((i) => (
              <span key={i} className="h-[7px] w-px bg-[#7d828a]" />
            ))}
          </span>
        </div>
        <button type="button" aria-label="Scroll right" className="flex w-[24px] justify-center">
          <svg width="6" height="11" viewBox="0 0 6 11">
            <path d="M0 0v11l6-5.500z" fill="#444" />
          </svg>
        </button>
        <Splitter />
      </div>
    </div>
  );
}

function VerticalScroll() {
  return (
    <div className="flex w-[19px] shrink-0 flex-col items-center bg-[#dce1ea] pt-px">
      <span className="flex h-[9px] w-full items-center justify-center border border-[#8b9097] bg-white">
        <span className="h-[3px] w-3 border-t border-[#777]" />
      </span>
      <button type="button" aria-label="Scroll up" className="flex h-5 rotate-180 items-center">
        <Arrow color="#444" w={11} />
      </button>
      <span className="flex flex-1 flex-col items-center justify-center gap-px self-stretch border border-[#8b9097] bg-linear-to-r from-[#f0f3f7] to-[#d5d9e0]">
        {[0, 1, 2, 3].map((i) => (
          <span key={i} className="h-px w-[7px] bg-[#7d828a]" />
        ))}
      </span>
      <span className="h-[24px]" />
      <button type="button" aria-label="Scroll down" className="flex h-[21px] items-center">
        <Arrow color="#444" w={11} />
      </button>
      <span className="h-5" />
    </div>
  );
}

/* ---------- field list ---------- */

function Check({ label, initial, size = 'gap-0.5' }: { label: string; initial: boolean; size?: string }) {
  const [on, setOn] = useState(initial);
  return (
    <label className={`flex h-[22px] items-center whitespace-nowrap ${size} ${on ? 'font-bold' : ''}`}>
      <span className="relative flex size-4 shrink-0">
        <input
          type="checkbox"
          checked={on}
          onChange={(e) => setOn(e.target.checked)}
          className="size-4 appearance-none border border-[#666] bg-white"
        />
        {on && (
          <svg className="pointer-events-none absolute inset-0" width="16" height="16" viewBox="0 0 16 16">
            <path d="M3.500 8l3 3.500L12.500 4" fill="none" stroke="#222" strokeWidth="2.200" />
          </svg>
        )}
      </span>
      {label}
    </label>
  );
}

function Area({ title, icon, chip, className }: { title: string; icon: React.ReactNode; chip?: string; className: string }) {
  return (
    <div className="flex w-[113px] flex-col">
      <div className="flex h-[28px] items-center whitespace-nowrap">
        <span className="flex w-8 pl-0.5">{icon}</span>
        {title}
      </div>
      <div className={`border border-[#9a9da3] bg-white p-px ${className}`}>
        {chip && (
          <button
            type="button"
            className="flex h-[22px] w-full items-center justify-between rounded-sm border border-[#efc74a] bg-linear-to-b from-white to-[#fdeec0] pr-[11px] pl-2 text-[#444]"
          >
            {chip}
            <Arrow color="#333" w={9} />
          </button>
        )}
      </div>
    </div>
  );
}

function FieldList() {
  return (
    <aside className="flex w-[256px] shrink-0 flex-col border border-t-2 border-[#8b9097] bg-[#eaedf3] px-0.5 pt-px text-xs text-black">
      <div className="flex h-7 shrink-0 items-center bg-[#ccd3dc] pr-[9px] pl-0.5 text-[#444]">
        <h2 className="flex-1 text-[18px] whitespace-nowrap">PivotTable Field List</h2>
        <button type="button" aria-label="Field list menu" className="mr-[14px]">
          <Arrow color="#333" w={21} />
        </button>
        <button type="button" aria-label="Close field list">
          <svg width="9" height="9" viewBox="0 0 9 9">
            <path d="M1 1l7 7M8 1L1 8" stroke="#444" strokeWidth="2" />
          </svg>
        </button>
      </div>
      <div className="flex flex-1 flex-col pr-[6px] pb-[11px] pl-[7px]">
        <div className="mt-[9px] flex h-[39px] items-start justify-between">
          <p className="w-[150px] pl-px leading-4">Choose fields to add to report:</p>
          <button type="button" aria-label="Field list layout" className="mr-0.5 flex h-7 w-12 items-center justify-center gap-[10px] border border-[#a9a9a9] bg-linear-to-b from-[#f2f2f2] to-[#e4e4e4]">
            <PaneLayoutIcon />
            <Arrow color="#000" w={9} />
          </button>
        </div>
        <div className="mr-px flex flex-1 flex-col border border-[#9a9da3] bg-white pl-0.5">
          <Check label="_c1" initial />
          <Check label="_c2" initial={false} />
          <Check label="country" initial />
        </div>
        <p className="mt-[21px] h-4 pt-px pl-px leading-4">Drag fields between areas below:</p>
        <div className="flex justify-between">
          <Area title="Report Filter" icon={<FunnelIcon />} className="h-[73px]" />
          <Area title="Legend Fiel..." icon={<FieldGridIcon side="top" />} className="h-[73px]" />
        </div>
        <div className="flex justify-between">
          <Area title="Axis Fields ..." icon={<FieldGridIcon side="left" />} chip="country" className="h-[72px]" />
          <Area
            title="Values"
            icon={<span className="pl-0.5 font-['Liberation_Serif',serif] text-base leading-none font-bold">Σ</span>}
            chip="Sum of _c1"
            className="h-[72px]"
          />
        </div>
        <div className="mt-[5px] mr-px flex h-[26px] items-center justify-between">
          <Check label="Defer Layout Upd..." initial={false} size="gap-2" />
          <button type="button" className="h-[26px] w-[86px] border border-[#d5d5d5] bg-[#ececee] text-[#949494]">
            Update
          </button>
        </div>
      </div>
    </aside>
  );
}

/* ---------- status bar ---------- */

function StatusBar() {
  return (
    <footer className="flex h-[27px] shrink-0 items-center border-t-2 border-[#8f95a0] bg-linear-to-b from-[#e1e4e7] to-[#bcc0c4] pl-2 text-[#444]">
      <span className="w-[45px]">Ready</span>
      <span className="h-full w-px bg-[#8b9097]" />
      <div className="flex-1" />
      <span className="mr-1 h-full w-px bg-[#8b9097]" />
      <button type="button" aria-label="Normal view" className="flex h-6 w-6 items-center justify-center rounded-sm border border-[#c28a2c] bg-[#fddc69]">
        <svg width="16" height="12" viewBox="0 0 16 12">
          <rect width="16" height="12" fill="#5c5c5c" />
          <path d="M1.500 1.500h3v2h-3zM6.500 1.500h3v2h-3zM11.500 1.500h3v2h-3zM1.500 5h3v2h-3zM6.500 5h3v2h-3zM11.500 5h3v2h-3zM1.500 8.500h3v2h-3zM6.500 8.500h3v2h-3zM11.500 8.500h3v2h-3z" fill="#fff" />
        </svg>
      </button>
      <button type="button" aria-label="Page layout view" className="ml-[2px]">
        <svg width="16" height="14" viewBox="0 0 16 14">
          <rect x="1" y="1" width="14" height="12" fill="#ccc" stroke="#666" strokeWidth="2" />
          <rect x="4" y="2.500" width="8" height="9" fill="#fff" stroke="#777" />
          <path d="M6 5h4M6 7h4M6 9h4" stroke="#777" />
        </svg>
      </button>
      <button type="button" aria-label="Page break preview" className="ml-[7px]">
        <svg width="17" height="14" viewBox="0 0 17 14">
          <rect width="17" height="14" fill="#666" />
          <path d="M2 0h3.500v8H2zM7 0h3.500v8H7zM12.500 0H15v11H2v-1h10.500z" fill="#ececec" />
        </svg>
      </button>
      <span className="w-[53px] pl-1.5 text-center">100%</span>
      <button type="button" aria-label="Zoom out" className="shrink-0">
        <svg width="21" height="21" viewBox="0 0 21 21">
          <circle cx="10.500" cy="10.500" r="9.500" fill="#eef0f2" stroke="#777c84" />
          <path d="M6 10.500h9" stroke="#555" strokeWidth="2" />
        </svg>
      </button>
      <span className="relative flex h-[21px] w-[124px] items-center">
        <svg width="124" height="21" viewBox="0 0 124 21" aria-hidden="true">
          <path d="M0 10.500h124" stroke="#8b9097" />
          <path d="M57.500 2.500h10v11l-5 4-5-4z" fill="#eef0f2" stroke="#666b73" />
        </svg>
        <input type="range" aria-label="Zoom" defaultValue={50} className="absolute inset-0 size-full opacity-0" />
      </span>
      <button type="button" aria-label="Zoom in" className="shrink-0">
        <svg width="21" height="21" viewBox="0 0 21 21">
          <circle cx="10.500" cy="10.500" r="9.500" fill="#eef0f2" stroke="#777c84" />
          <path d="M6 10.500h9M10.500 6v9" stroke="#555" strokeWidth="2" />
        </svg>
      </button>
      <svg width="13" height="12" viewBox="0 0 13 12" className="ml-[7px] self-end" aria-hidden="true">
        <path d="M10 0h2.500v2.500H10zM5 4.500h2.500V7H5zM10 4.500h2.500V7H10zM0 9h2.500v2.500H0zM5 9h2.500v2.500H5zM10 9h2.500v2.500H10z" fill="#9297a0" />
      </svg>
    </footer>
  );
}

export default function App() {
  return (
    <div className="flex h-screen flex-col overflow-hidden border border-[#c9c9c9] bg-[#ebebeb] px-2 pb-2 font-['Noto_Sans',sans-serif] text-[13px]">
      <Header />
      <Ribbon />
      <div className="h-[3px] shrink-0 bg-[#d5d9df]" />
      <FormulaBar />
      <div className="h-1 shrink-0 bg-[#eef1f5]" />
      <main className="flex min-h-0 flex-1">
        <div className="flex min-w-0 flex-1 flex-col">
          <div className="relative min-h-0 flex-1 overflow-hidden bg-white">
            <Sheet />
            <PivotChart />
            <svg width="16" height="16" viewBox="0 0 16 16" className="absolute top-[443px] left-[916px]" aria-hidden="true">
              <path d="M5.500 1.500h5v4h4v5h-4v4h-5v-4h-4v-5h4z" fill="#fff" stroke="#000" strokeWidth="1.500" />
              <path d="M15 6v5.500h-4V15H6" fill="none" stroke="#000" />
            </svg>
            <span className="absolute inset-x-0 top-0 h-px bg-[#8b9097]" />
          </div>
          <BottomBar />
        </div>
        <VerticalScroll />
        <FieldList />
      </main>
      <StatusBar />
    </div>
  );
}
